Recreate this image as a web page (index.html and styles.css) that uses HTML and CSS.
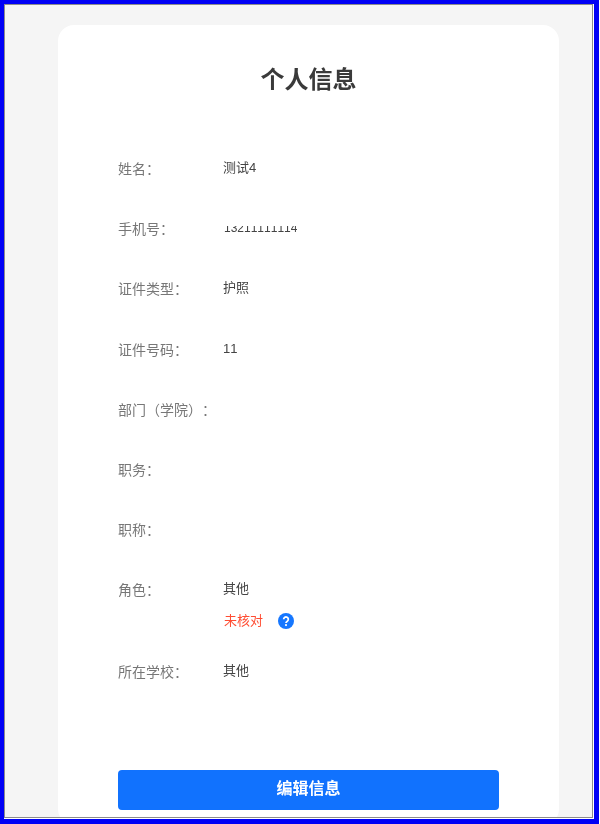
FILE: index.html
```html
<!DOCTYPE html>
<html lang="zh-CN">
<head>
    <meta charset="UTF-8">
    <meta name="viewport" content="width=device-width, initial-scale=1.0">
    <title>个人信息</title>
    <link rel="stylesheet" href="styles.css">
</head>
<body>
    <div class="frame">
        <div class="page">
            <div class="card">
                <h1 class="title">个人信息</h1>
                <div class="info-list">
                    <div class="info-row"><span class="label">姓名：</span><span class="value">测试4</span></div>
                    <div class="info-row"><span class="label">手机号：</span><span class="value-clipped"><span>13211111114</span></span></div>
                    <div class="info-row"><span class="label">证件类型：</span><span class="value">护照</span></div>
                    <div class="info-row"><span class="label">证件号码：</span><span class="value">11</span></div>
                    <div class="info-row"><span class="label">部门（学院）：</span><span class="value"></span></div>
                    <div class="info-row"><span class="label">职务：</span><span class="value"></span></div>
                    <div class="info-row"><span class="label">职称：</span><span class="value"></span></div>
                    <div class="info-row info-row-role">
                        <span class="label">角色：</span>
                        <div class="value-stack">
                            <span class="value">其他</span>
                            <div class="verify">
                                <span class="verify-text">未核对</span>
                                <svg class="help-icon" viewBox="0 0 16 16">
                                    <circle cx="8" cy="8" r="8" fill="#1677ff"/>
                                    <path d="M5.7 6.3a2.3 2.3 0 1 1 3.6 1.9c-.9.6-1.3 1-1.3 1.9" fill="none" stroke="#fff" stroke-width="1.8"/>
                                    <circle cx="8" cy="12.1" r="1.1" fill="#fff"/>
                                </svg>
                            </div>
                        </div>
                    </div>
                    <div class="info-row"><span class="label">所在学校：</span><span class="value">其他</span></div>
                </div>
                <button class="edit-btn">编辑信息</button>
            </div>
        </div>
    </div>
</body>
</html>
```

FILE: styles.css
```css
* {
    box-sizing: border-box;
}
html, body {
    margin: 0;
    height: 824px;
    overflow: hidden;
    background: #fff;
}
body {
    font-family: "Liberation Sans", "Noto Sans CJK SC", sans-serif;
    font-kerning: none;
    text-spacing-trim: space-all;
}
.frame {
    width: 599px;
    height: 824px;
    border: 4px solid #0000f5;
    border-right-width: 5px;
    border-bottom-width: 5px;
    padding: 0 1px 1px 0;
    background: #fff;
}
.page {
    height: 100%;
    border: 1px solid #8c8c8c;
    background: #f5f5f5;
    padding: 20px 33px 0 53px;
    overflow: hidden;
}
.card {
    height: 800px;
    background: #fff;
    border-radius: 16px;
    padding: 38px 60px 0;
    filter: blur(0.35px);
}
.title {
    margin: 0 0 61px;
    height: 34px;
    font-size: 24px;
    line-height: 34px;
    font-weight: 700;
    color: #3a3a3a;
    text-align: center;
}
.info-row {
    display: flex;
    height: 60.2px;
    font-size: 14px;
    line-height: 20px;
}
.info-row-role {
    height: 82px;
}
.label {
    width: 105px;
    color: #777;
    line-height: 22px;
}
.value {
    color: #444;
    font-size: 13px;
}
.value-clipped {
    display: block;
    height: 6px;
    margin-top: 8px;
    margin-left: 1px;
    overflow: hidden;
    color: #444;
    font-size: 12px;
    line-height: 12px;
}
.value-clipped span {
    display: block;
    margin-top: -4px;
}
.value-stack {
    display: flex;
    flex-direction: column;
}
.verify {
    display: flex;
    align-items: center;
    gap: 15px;
    margin-top: 12px;
    margin-left: 1px;
}
.verify-text {
    color: #ff4d33;
    font-size: 13px;
}
.help-icon {
    width: 16px;
    height: 16px;
}
.edit-btn {
    display: block;
    width: 381px;
    height: 40px;
    margin-top: 48px;
    padding: 0 0 5px;
    border: 0;
    border-radius: 4px;
    background: #1172fe;
    color: #fff;
    font-family: inherit;
    font-size: 16px;
    font-weight: 700;
}
```
